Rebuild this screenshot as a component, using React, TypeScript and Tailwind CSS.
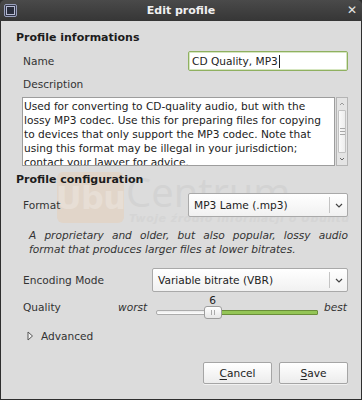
import React from "react";

const descLines = [
  "Used for converting to CD-quality audio, but with the",
  "lossy MP3 codec. Use this for preparing files for copying",
  "to devices that only support the MP3 codec. Note that",
  "using this format may be illegal in your jurisdiction;",
  "contact your lawyer for advice.",
];

function Combo({ value, className }: { value: string; className: string }) {
  return (
    <div
      className={`flex h-[24px] items-stretch rounded-[2px] border border-[#a9a9a9] bg-gradient-to-b from-white to-[#f1f1f1] ${className}`}
    >
      <div className="flex flex-1 items-center pl-[5px] text-[#222]">{value}</div>
      <div className="my-[3px] w-px bg-[#c4c4c4]" />
      <div className="flex w-[17px] items-center justify-center">
        <svg width="8" height="5" viewBox="0 0 8 5">
          <path d="M1 1 L4 4 L7 1" fill="none" stroke="#444" strokeWidth="1.2" />
        </svg>
      </div>
    </div>
  );
}

function Btn({ first, rest }: { first: string; rest: string }) {
  return (
    <div className="flex h-[22px] w-[69px] items-center justify-center rounded-[2px] border border-[#a5a5a5] bg-gradient-to-b from-white to-[#ececec] text-[#222] shadow-[0_1px_0_rgba(255,255,255,0.6)]">
      <span className="underline underline-offset-2">{first}</span>
      {rest}
    </div>
  );
}

export default function App() {
  return (
    <div className="relative h-[400px] w-[362px] overflow-hidden bg-[#2e2e2e] font-['DejaVu_Sans',sans-serif] text-[10.6px] leading-[14px]">
      {/* title bar */}
      <div className="relative flex h-[21px] items-center justify-center rounded-t-[5px] bg-gradient-to-b from-[#4a4a4a] to-[#363636]">
        <div className="absolute left-[4px] top-[4px] flex h-[13px] w-[13px] items-center justify-center rounded-[2px] border border-[#9aa0bc] bg-[#33374a]">
          <div className="h-[9px] w-[9px] border border-[#b8bcd4] bg-[#2a2e3c]" />
        </div>
        <span className="text-[11px] font-bold text-[#f0f0f0]">Edit profile</span>
        <span className="absolute right-[5px] top-[3px] text-[12px] font-bold text-[#e6e6e6]">✕</span>
      </div>

      {/* body */}
      <div className="relative ml-px mr-px flex h-[378px] flex-col bg-[#dcdcdc] pl-[15px] pr-[13px]">
        {/* watermark */}
        <div className="pointer-events-none absolute left-[56px] top-[151px] flex h-[52px] items-start">
          <div className="flex h-[51px] w-[67px] items-center justify-center rounded-[6px] bg-[#e1d5c9] text-[32px] font-semibold tracking-tight text-[#e7ded5]">
            Ubu
          </div>
          <div className="ml-[2px] mt-[-4px] font-['Open_Sans',sans-serif] text-[40px] leading-[48px] text-[#d3d3d3]">
            Centrum
          </div>
          <div className="mt-[22px] text-[11px] text-[#d5d5d5]">.net</div>
        </div>
        <div className="pointer-events-none absolute left-[128px] top-[191px] text-[11px] font-bold italic tracking-[0.5px] text-[#d5d5d5]">
          Twoje źródło informacji o Ubuntu
        </div>

        <div className="relative mt-[10px] text-[11px] font-bold text-[#1c1c1c]">Profile informations</div>

        <div className="relative mt-[6px] flex h-[20px] items-center">
          <span className="ml-[7px] flex-1 text-[#333]">Name</span>
          <div className="flex h-[20px] w-[160px] items-center rounded-[2px] border border-[#8fb060] bg-white pl-[3px] text-[#222] shadow-[inset_0_0_0_1px_#d6e6c0]">
            CD Quality, MP3<span className="ml-px inline-block h-[13px] w-px bg-[#222]" />
          </div>
        </div>

        <div className="relative ml-[7px] mt-[6px] text-[#333]">Description</div>

        <div className="relative ml-[6px] mt-[6px] flex h-[69px]">
          <div className="flex-1 overflow-hidden border border-[#9d9d9d] bg-white pl-[1px] pt-[1px] text-[#222]">
            {descLines.map((l) => (
              <div key={l} className="whitespace-nowrap leading-[14px]">
                {l}
              </div>
            ))}
          </div>
          <div className="ml-px flex w-[12px] flex-col border border-[#b4b4b4] bg-[#e4e4e4]">
            <div className="flex h-[12px] items-center justify-center">
              <svg width="6" height="4" viewBox="0 0 6 4">
                <path d="M1 3 L3 1 L5 3" fill="none" stroke="#9a9a9a" strokeWidth="1" />
              </svg>
            </div>
            <div className="mx-px flex flex-1 flex-col items-center justify-center gap-[2px] rounded-[1px] border border-[#c2c2c2] bg-gradient-to-r from-[#fafafa] to-[#ededed]">
              <div className="h-px w-[5px] bg-[#a8a8a8]" />
              <div className="h-px w-[5px] bg-[#a8a8a8]" />
              <div className="h-px w-[5px] bg-[#a8a8a8]" />
            </div>
            <div className="flex h-[12px] items-center justify-center">
              <svg width="6" height="4" viewBox="0 0 6 4">
                <path d="M1 1 L3 3 L5 1" fill="none" stroke="#666" strokeWidth="1" />
              </svg>
            </div>
          </div>
        </div>

        <div className="relative mt-[7px] text-[11px] font-bold text-[#1c1c1c]">Profile configuration</div>

        <div className="relative mt-[6px] flex h-[24px] items-center">
          <span className="ml-[7px] flex-1 text-[#333]">Format</span>
          <Combo value="MP3 Lame (.mp3)" className="w-[160px]" />
        </div>

        <div className="relative ml-[13px] mt-[11px] italic text-[#333]">
          <div className="text-justify [text-align-last:justify]">
            A proprietary and older, but also popular, lossy audio
          </div>
          <div>format that produces larger files at lower bitrates.</div>
        </div>

        <div className="relative mt-[12px] flex h-[24px] items-center">
          <span className="ml-[7px] flex-1 text-[#333]">Encoding Mode</span>
          <Combo value="Variable bitrate (VBR)" className="w-[196px]" />
        </div>

        <div className="relative mt-[1px] flex h-[28px] items-center">
          <span className="ml-[7px] w-[95px] text-[#333]">Quality</span>
          <span className="w-[30px] italic text-[#333]">worst</span>
          <div className="relative ml-[8px] mt-[2px] h-[28px] w-[162px]">
            <div className="absolute left-[48px] top-[-1px] w-[17px] text-center text-[#222]">6</div>
            <div className="absolute left-0 top-[16px] h-[5px] w-[50px] rounded-l-[2px] border border-[#acacac] bg-gradient-to-b from-[#e9e9e9] to-white" />
            <div className="absolute left-[60px] top-[16px] h-[5px] w-[102px] rounded-r-[1px] border border-[#6a8e3a] bg-[#94c556]" />
            <div className="absolute left-[48px] top-[12px] flex h-[13px] w-[18px] items-center justify-center gap-[2px] rounded-[3px] border border-[#9d9d9d] bg-gradient-to-b from-white to-[#e6e6e6]">
              <div className="h-[5px] w-px bg-[#aaa]" />
              <div className="h-[5px] w-px bg-[#aaa]" />
            </div>
          </div>
          <span className="ml-[6px] italic text-[#333]">best</span>
        </div>

        <div className="relative ml-[11px] mt-[8px] flex items-center">
          <svg width="7" height="10" viewBox="0 0 7 10">
            <path d="M1 1 L5.5 5 L1 9 Z" fill="#f4f4f4" stroke="#555" strokeWidth="1" />
          </svg>
          <span className="ml-[7px] text-[#333]">Advanced</span>
        </div>

        <div className="relative mt-[19px] flex justify-end gap-[7px]">
          <Btn first="C" rest="ancel" />
          <Btn first="S" rest="ave" />
        </div>
      </div>
    </div>
  );
}
